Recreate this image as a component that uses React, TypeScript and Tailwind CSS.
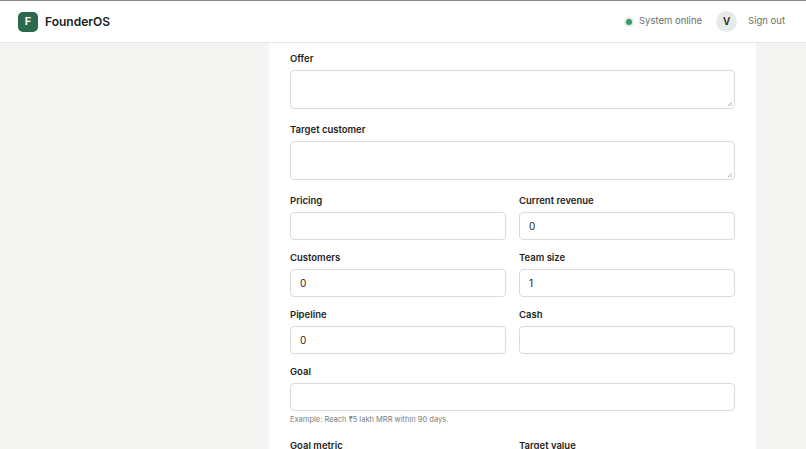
export default function App() {
  const font = { fontFamily: "Inter, 'Noto Sans', sans-serif" };
  const Label = ({ t }: { t: string }) => (
    <div className="text-[9.5px] leading-[14px] font-semibold text-[#1f2421] mb-[4px]">{t}</div>
  );
  const Input = ({ v }: { v?: string }) => (
    <div className="h-[28px] rounded-[4px] border border-[#d9ddd9] bg-white px-[9px] flex items-center text-[10px] text-[#1f2421]">{v}</div>
  );
  const Area = () => (
    <div className="relative h-[39px] rounded-[4px] border border-[#d9ddd9] bg-white">
      <svg className="absolute right-[1px] bottom-[1px]" width="6" height="6" viewBox="0 0 6 6"><path d="M5 1L1 5M5 3.5L3.5 5" stroke="#888" strokeWidth="0.7" /></svg>
    </div>
  );
  const Pair = ({ a, av, b, bv }: { a: string; av?: string; b: string; bv?: string }) => (
    <div className="grid grid-cols-2 gap-[13px] mb-[11px]">
      <div><Label t={a} /><Input v={av} /></div>
      <div><Label t={b} /><Input v={bv} /></div>
    </div>
  );
  return (
    <div style={font} className="w-[806px] h-[449px] overflow-hidden bg-[#f4f5f3] border-t border-[#8a8a8a]">
      <div className="h-[42px] bg-white border-b border-[#e6e8e5] flex items-center justify-between pl-[18px] pr-[21px]">
        <div className="flex items-center gap-[7px]">
          <div className="w-[20px] h-[20px] rounded-[5px] bg-[#2b6a4c] text-white text-[11px] font-bold flex items-center justify-center">F</div>
          <span className="text-[12px] font-semibold text-[#1a1f1c]">FounderOS</span>
        </div>
        <div className="flex items-center text-[9.5px] text-[#6b716d]">
          <span className="w-[6px] h-[6px] rounded-full bg-[#3c9a6a] ring-2 ring-[#dcefe4] mr-[7px]"></span>
          <span>System online</span>
          <div className="ml-[14px] w-[21px] h-[21px] rounded-full bg-[#e7ebe7] text-[#1f2421] font-semibold text-[10px] flex items-center justify-center">V</div>
          <span className="ml-[11px]">Sign out</span>
        </div>
      </div>
      <div className="ml-[269px] w-[487px] bg-white h-[406px] px-[21px] pt-[9px]">
        <Label t="Offer" /><Area />
        <div className="h-[14px]" />
        <Label t="Target customer" /><Area />
        <div className="h-[14px]" />
        <Pair a="Pricing" b="Current revenue" bv="0" />
        <Pair a="Customers" av="0" b="Team size" bv="1" />
        <Pair a="Pipeline" av="0" b="Cash" />
        <Label t="Goal" /><Input />
        <div className="text-[7.5px] text-[#7a807c] mt-[4px] leading-[10px]">Example: Reach ₹5 lakh MRR within 90 days.</div>
        <div className="grid grid-cols-2 gap-[13px] mt-[14px]">
          <Label t="Goal metric" /><Label t="Target value" />
        </div>
      </div>
    </div>
  );
}
